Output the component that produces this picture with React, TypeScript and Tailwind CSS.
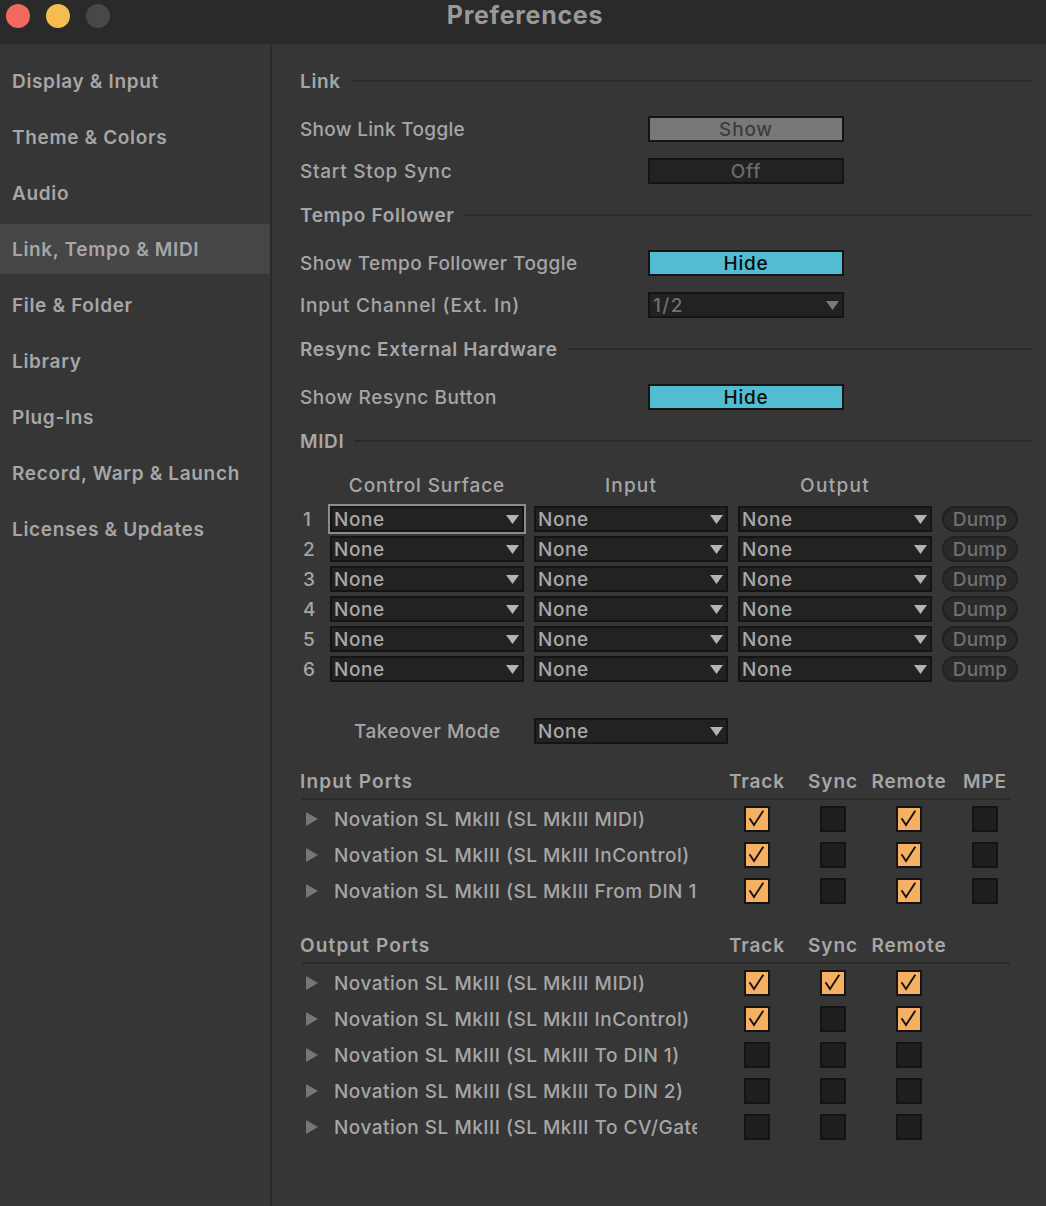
const nav = ["Display & Input","Theme & Colors","Audio","Link, Tempo & MIDI","File & Folder","Library","Plug-Ins","Record, Warp & Launch","Licenses & Updates"];

function Tri({ className = "fill-[#b4b4b4]" }: { className?: string }) {
  return (
    <svg width="13" height="9" viewBox="0 0 14 10" preserveAspectRatio="none" className={className}>
      <path d="M0 0H14L7 10Z" />
    </svg>
  );
}

function Section({ title, className = "" }: { title: string; className?: string }) {
  return (
    <div className={`flex h-6 items-center gap-[10px] ${className}`}>
      <span className="pt-[2px] text-[19px] leading-[22px] font-semibold tracking-[0.65px] text-[#a6a6a6]">{title}</span>
      <div className="h-[2px] flex-1 bg-[#2a2a2a]" />
    </div>
  );
}

function Row({ label, track, children, className = "" }: { label: string; track: string; children: React.ReactNode; className?: string }) {
  return (
    <div className={`flex h-[26px] items-center ${className}`}>
      <span className={`w-[348px] shrink-0 pt-[2px] text-[19px] leading-[22px] font-medium text-[#a6a6a6] ${track}`}>{label}</span>
      {children}
    </div>
  );
}

function Btn({ label, cls }: { label: string; cls: string }) {
  return (
    <div className={`flex h-[26px] w-[196px] items-center justify-center border-2 border-[#141414] pt-[2px] text-[19px] leading-[20px] font-medium tracking-[0.8px] ${cls}`}>
      {label}
    </div>
  );
}

function Select({ value = "None", w = "w-[194px]", focus = false, dim = false }: { value?: string; w?: string; focus?: boolean; dim?: boolean }) {
  return (
    <div className={`flex h-[26px] shrink-0 items-center justify-between border-2 border-[#141414] bg-[#222222] pr-[2px] text-[19px] leading-[20px] font-medium ${w} ${dim ? "pl-[3px] tracking-[1.4px] text-[#707070]" : "pl-[2px] tracking-[0.6px] text-[#a8a8a8]"} ${focus ? "outline-2 outline-[#8c8c8c]" : ""}`}>
      <span className="pt-[1px]">{value}</span>
      <Tri className={dim ? "fill-[#7a7a7a] mr-[1px]" : "fill-[#b4b4b4] mr-[1px]"} />
    </div>
  );
}

function Check({ on }: { on: boolean }) {
  return (
    <div className={`flex h-[26px] w-[26px] items-center justify-center border-2 border-[#141414] ${on ? "bg-[#f5b061]" : "bg-[#1f1f1f]"}`}>
      {on && (
        <svg width="18" height="18" viewBox="0 0 18 18" fill="none" stroke="#141414" strokeWidth="1.9" className="overflow-visible">
          <path d="M1.5 8.3 6 15 15.3 0.7" />
        </svg>
      )}
    </div>
  );
}

function PortHeader({ title, mpe }: { title: string; mpe?: boolean }) {
  return (
    <div className="flex h-6 items-center pt-[2px] text-[19px] leading-[22px] font-semibold tracking-[0.9px] text-[#a6a6a6]">
      <span className="w-[419px] shrink-0 tracking-[1.15px]">{title}</span>
      {["Track", "Sync", "Remote"].map((c) => (
        <span key={c} className="w-[76px] shrink-0 text-center">{c}</span>
      ))}
      {mpe && <span className="w-[76px] shrink-0 text-center">MPE</span>}
    </div>
  );
}

function Port({ name, checks }: { name: string; checks: boolean[] }) {
  return (
    <div className="flex h-[26px] items-center pl-[6px]">
      <svg width="12" height="14" viewBox="0 0 12 14" className="mr-[16px] shrink-0 fill-[#767676]">
        <path d="M0 0 12 7 0 14Z" />
      </svg>
      <span className="w-[363px] shrink-0 overflow-hidden whitespace-nowrap pt-[2px] text-[19px] leading-[22px] font-medium tracking-[0.5px] text-[#a6a6a6]">{name}</span>
      <div className="flex">
        <div className="w-[22px]" />
        {checks.map((c, i) => (
          <div key={i} className={`w-[26px] ${i ? "ml-[50px]" : "ml-[25px]"}`}>
            <Check on={c} />
          </div>
        ))}
      </div>
    </div>
  );
}

const P = "Novation SL MkIII (SL MkIII ";

export default function App() {
  return (
    <div className="flex h-[1206px] w-[1046px] flex-col overflow-hidden bg-[#363636] font-['Inter',sans-serif]">
      <header className="relative flex h-[44px] shrink-0 items-center justify-center bg-[#2a2a2a]">
        <div className="absolute left-[6px] top-[4px] flex gap-4">
          <div className="h-6 w-6 rounded-full bg-[#f2695f]" />
          <div className="h-6 w-6 rounded-full bg-[#f5bd4f]" />
          <div className="h-6 w-6 rounded-full bg-[#484848]" />
        </div>
        <span className="-mt-[13px] pl-1 text-[25px] font-bold tracking-[0.7px] text-[#999999]">Preferences</span>
      </header>
      <div className="flex flex-1">
        <aside className="w-[272px] shrink-0 border-r-2 border-[#2a2a2a] pt-3">
          <nav className="flex flex-col gap-[6px]">
            {nav.map((n) => (
              <div key={n} className={`flex h-[50px] items-center pl-3 pt-[2px] text-[19px] font-semibold tracking-[0.66px] text-[#a6a6a6] ${n.startsWith("Link") ? "bg-[#464646]" : ""}`}>
                {n}
              </div>
            ))}
          </nav>
        </aside>
        <main className="flex-1 pl-7 pr-[14px] pt-[25px]">
          <Section title="Link" />
          <Row label="Show Link Toggle" track="tracking-[0.3px]" className="mt-[23px]">
            <Btn label="Show" cls="bg-[#787878] text-[#3c3c3c]" />
          </Row>
          <Row label="Start Stop Sync" track="tracking-[0.75px]" className="mt-4">
            <Btn label="Off" cls="bg-[#222222] text-[#6a6a6a]" />
          </Row>
          <Section title="Tempo Follower" className="mt-[19px]" />
          <Row label="Show Tempo Follower Toggle" track="tracking-[0.42px]" className="mt-[23px]">
            <Btn label="Hide" cls="bg-[#52bcd2] text-[#0c0c0c]" />
          </Row>
          <Row label="Input Channel (Ext. In)" track="tracking-[0.8px]" className="mt-4">
            <Select value="1/2" w="w-[196px]" dim />
          </Row>
          <Section title="Resync External Hardware" className="mt-[19px]" />
          <Row label="Show Resync Button" track="tracking-[0.58px]" className="mt-[23px]">
            <Btn label="Hide" cls="bg-[#52bcd2] text-[#0c0c0c]" />
          </Row>
          <Section title="MIDI" className="mt-[19px]" />

          <div className="mt-5 flex h-6 items-center pt-[2px] text-[19px] leading-[22px] font-medium text-[#a6a6a6]">
            <span className="ml-[30px] w-[194px] text-center tracking-[0.9px]">Control Surface</span>
            <span className="ml-[10px] w-[194px] text-center tracking-[1.2px]">Input</span>
            <span className="ml-[10px] w-[194px] text-center tracking-[1.3px]">Output</span>
          </div>
          <div className="mt-[9px] flex flex-col gap-1">
            {[1, 2, 3, 4, 5, 6].map((n) => (
              <div key={n} className="flex items-center gap-[10px]">
                <span className="-mr-[10px] w-[30px] pl-[3px] pt-[2px] text-[19px] leading-[22px] font-medium text-[#a6a6a6]">{n}</span>
                <Select focus={n === 1} />
                <Select />
                <Select />
                <div className="flex h-[26px] w-[76px] items-center justify-center rounded-full border-2 border-[#202020] bg-[#2a2a2a] pt-[1px] text-[19px] leading-[20px] font-medium tracking-[0.2px] text-[#707070]">Dump</div>
              </div>
            ))}
          </div>

          <div className="mt-9 flex h-[26px] items-center">
            <span className="w-[234px] pl-[54px] pt-[2px] text-[19px] leading-[22px] font-medium tracking-[0.5px] text-[#a6a6a6]">Takeover Mode</span>
            <Select />
          </div>

          <div className="mt-[25px]"><PortHeader title="Input Ports" mpe /></div>
          <div className="ml-[2px] mt-[5px] h-[2px] w-[708px] bg-[#2a2a2a]" />
          <div className="mt-[6px] flex flex-col gap-[10px]">
            <Port name={P + "MIDI)"} checks={[true, false, true, false]} />
            <Port name={P + "InControl)"} checks={[true, false, true, false]} />
            <Port name={P + "From DIN 1)"} checks={[true, false, true, false]} />
          </div>

          <div className="mt-[29px]"><PortHeader title="Output Ports" /></div>
          <div className="ml-[2px] mt-[5px] h-[2px] w-[708px] bg-[#2a2a2a]" />
          <div className="mt-[6px] flex flex-col gap-[10px]">
            <Port name={P + "MIDI)"} checks={[true, true, true]} />
            <Port name={P + "InControl)"} checks={[true, false, true]} />
            <Port name={P + "To DIN 1)"} checks={[false, false, false]} />
            <Port name={P + "To DIN 2)"} checks={[false, false, false]} />
            <Port name={P + "To CV/Gate)"} checks={[false, false, false]} />
          </div>
        </main>
      </div>
    </div>
  );
}
